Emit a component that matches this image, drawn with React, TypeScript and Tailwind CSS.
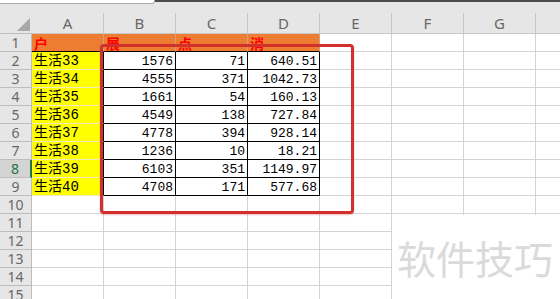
const data: [string, string, string, string][] = [
  ["生活33", "1576", "71", "640.51"],
  ["生活34", "4555", "371", "1042.73"],
  ["生活35", "1661", "54", "160.13"],
  ["生活36", "4549", "138", "727.84"],
  ["生活37", "4778", "394", "928.14"],
  ["生活38", "1236", "10", "18.21"],
  ["生活39", "6103", "351", "1149.97"],
  ["生活40", "4708", "171", "577.68"],
];

const cols = ["A", "B", "C", "D", "E", "F", "G"];
const heads = ["户", "展", "点", "消"];
const mono = "font-['Liberation_Mono','Noto_Sans_CJK_SC',monospace]";

function Cell({ row, col }: { row: number; col: number }) {
  // row 1 is the orange header, rows 2-9 hold data
  if (row === 1 && col < 4) {
    return (
      <div className="flex h-[18px] items-center overflow-hidden border-r border-b border-r-[#c9a089] border-b-black bg-[#ed7d31] pl-[2px] font-['Noto_Sans_CJK_SC',sans-serif] text-[14px] font-bold leading-none text-[#ff0000]">
        {heads[col]}
      </div>
    );
  }
  if (row >= 2 && row <= 9 && col === 0) {
    return (
      <div className={`flex h-[18px] items-center border-r border-b border-r-black border-b-[#ecebc4] bg-[#ffff00] pl-[2px] text-[14px] leading-none text-black ${mono}`}>
        {data[row - 2][0]}
      </div>
    );
  }
  if (row >= 2 && row <= 9 && col < 4) {
    return (
      <div className={`flex h-[18px] items-center justify-end border-r border-b border-black bg-white pr-[2px] pt-[1px] text-[13px] leading-none text-black ${mono}`}>
        {data[row - 2][col]}
      </div>
    );
  }
  return <div className="h-[18px] border-r border-b border-[#d4d4d4] bg-white" />;
}

export default function App() {
  const rows = Array.from({ length: 15 }, (_, i) => i + 1);
  return (
    <div className="relative h-[299px] w-[560px] overflow-hidden bg-white font-['Noto_Sans',sans-serif]">
      {/* formula bar edge */}
      <div className="flex h-[4px]">
        <div className="w-[155px] rounded-br-[3px] border-r border-b border-[#a8a8a8] bg-white" />
        <div className="flex-1 border-t-2 border-[#4a4a4a] bg-[#e6e6e6]" />
      </div>

      {/* column headers, with the select-all corner */}
      <div className="grid h-[30px] grid-cols-[32px_repeat(7,72px)_1fr] bg-[#e6e6e6]">
        <div className="flex items-end justify-end border-b border-[#bdbdbd] pr-[2px] pb-[2px]">
          <svg width="13" height="13" viewBox="0 0 13 13" className="shrink-0">
            <path d="M13 0 L13 13 L0 13 Z" fill="#a8a8a8" />
          </svg>
        </div>
        {cols.map((c) => (
          <div key={c} className="flex flex-col">
            <div className="h-[9px]" />
            <div className="flex flex-1 items-center justify-center border-r border-b border-[#c6c6c6] text-[15px] leading-none text-[#666]">
              {c}
            </div>
          </div>
        ))}
        <div className="border-b border-[#c6c6c6]" />
      </div>

      {rows.map((r) => (
        <div key={r} className="grid grid-cols-[32px_repeat(7,72px)_1fr]">
          <div
            className={
              r === 8
                ? "h-[18px] overflow-hidden border-r-2 border-b border-r-[#217346] border-b-[#bdbdbd] bg-[#d4d4d4] text-center text-[14px] leading-[17px] text-[#217346]"
                : "h-[18px] overflow-hidden border-r border-b border-[#bdbdbd] bg-[#e6e6e6] text-center text-[14px] leading-[17px] text-[#666]"
            }
          >
            {r}
          </div>
          {cols.map((_, ci) => (
            <Cell key={ci} row={r} col={ci} />
          ))}
          <div className="h-[18px] border-b border-[#d4d4d4] bg-white" />
        </div>
      ))}

      {/* red annotation box */}
      <div className="absolute top-[44px] left-[100px] h-[170px] w-[254px] rounded-[4px] border-[3px] border-[#d2302c] shadow-[0_1px_2px_rgba(200,60,60,0.35)]" />

      {/* watermark */}
      <div className="absolute top-[215px] right-0 bottom-0 left-[392px] bg-white">
        <div className="mt-[19px] ml-[5px] font-['Noto_Sans_CJK_SC',sans-serif] text-[39px] leading-[46px] text-[#dadada]">
          软件技巧
        </div>
      </div>
    </div>
  );
}
